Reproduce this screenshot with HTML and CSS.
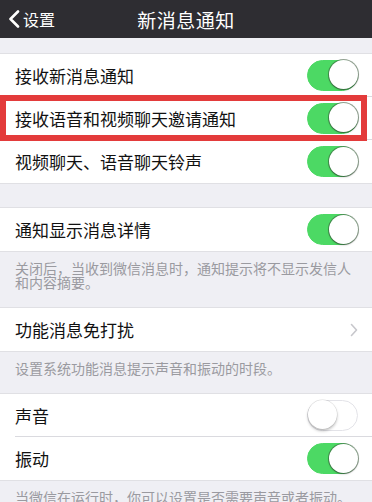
FILE: index.html
```html
<!DOCTYPE html>
<html lang="zh-CN">
<head>
<meta charset="utf-8">
<title>新消息通知</title>
<link rel="stylesheet" href="styles.css">
</head>
<body>
	<div class="navbar">
		<div class="nav_back">
			<svg class="back_icon" width="12" height="18" viewBox="0 0 12 18">
				<polyline points="10,1.5 2.5,9 10,16.5" fill="none" stroke="#fff" stroke-width="2.6" stroke-linecap="round" stroke-linejoin="round"/>
			</svg>
			<span>设置</span>
		</div>
		<div class="nav_title">新消息通知</div>
	</div>

	<div class="gap_top"></div>

	<div class="group">
		<div class="row">
			<span class="label">接收新消息通知</span>
			<span class="switch on"></span>
		</div>
		<div class="row marked">
			<span class="label">接收语音和视频聊天邀请通知</span>
			<span class="switch on"></span>
			<div class="red_box"></div>
		</div>
		<div class="row">
			<span class="label">视频聊天、语音聊天铃声</span>
			<span class="switch on"></span>
		</div>
	</div>

	<div class="gap_mid"></div>

	<div class="group">
		<div class="row">
			<span class="label">通知显示消息详情</span>
			<span class="switch on"></span>
		</div>
	</div>
	<div class="footer">关闭后，当收到微信消息时，通知提示将不显示发信人和内容摘要。</div>

	<div class="group">
		<div class="row">
			<span class="label">功能消息免打扰</span>
			<svg class="arrow" width="8" height="14" viewBox="0 0 8 14">
				<polyline points="1.5,1.5 6.5,7 1.5,12.5" fill="none" stroke="#c7c7cc" stroke-width="1.6" stroke-linecap="round" stroke-linejoin="round"/>
			</svg>
		</div>
	</div>
	<div class="footer">设置系统功能消息提示声音和振动的时段。</div>

	<div class="group">
		<div class="row">
			<span class="label">声音</span>
			<span class="switch"></span>
		</div>
		<div class="row">
			<span class="label">振动</span>
			<span class="switch on"></span>
		</div>
	</div>
	<div class="footer">当微信在运行时，你可以设置是否需要声音或者振动。</div>
</body>
</html>
```

FILE: styles.css
```css
body {
	margin: 0;
	background: #efeff4;
	font-family: "Noto Sans CJK SC", "Noto Sans", sans-serif;
	color: #111;
	overflow: hidden;
}

.navbar {
	height: 38px;
	background: #2e2d32;
	color: #fff;
	position: relative;
	display: flex;
	align-items: center;
	justify-content: center;
}
.nav_back {
	position: absolute;
	left: 8px;
	top: 0;
	height: 38px;
	display: flex;
	align-items: center;
	font-size: 16px;
	gap: 3px;
}
.nav_title {
	font-size: 19px;
	letter-spacing: 0.5px;
}

.gap_top { height: 15px; }
.gap_mid { height: 23px; }

.group {
	background: #fff;
	border-top: 1px solid #e0e0e4;
	border-bottom: 1px solid #e0e0e4;
}

.row {
	box-sizing: border-box;
	height: 43px;
	margin-left: 15px;
	padding-right: 14px;
	display: flex;
	align-items: center;
	justify-content: space-between;
	border-bottom: 1px solid #dadadf;
	position: relative;
}
.row:last-child { border-bottom: none; }

.label {
	font-size: 17px;
}

.switch {
	width: 51px;
	height: 31px;
	border-radius: 16px;
	box-sizing: border-box;
	border: 1.5px solid #e3e3e8;
	background: #fff;
	position: relative;
}
.switch::after {
	content: "";
	position: absolute;
	top: -0.5px;
	left: -0.5px;
	width: 29px;
	height: 29px;
	border-radius: 50%;
	background: #fff;
	box-shadow: 0 2px 3px rgba(0,0,0,0.25), 0 0 0 0.5px rgba(0,0,0,0.12);
}
.switch.on {
	background: #4cd964;
	border-color: #4cd964;
}
.switch.on::after {
	left: auto;
	right: -0.5px;
	box-shadow: 0 1px 2px rgba(0,0,0,0.3), 0 0 0 1px rgba(60,90,60,0.55);
}

.red_box {
	position: absolute;
	left: -15px;
	right: 5px;
	top: -2px;
	bottom: -2px;
	border: 6px solid #e33b3b;
	pointer-events: none;
}

.footer {
	padding: 9px 15px 18px;
	font-size: 14px;
	line-height: 14px;
	color: #9a9aa0;
}
```
